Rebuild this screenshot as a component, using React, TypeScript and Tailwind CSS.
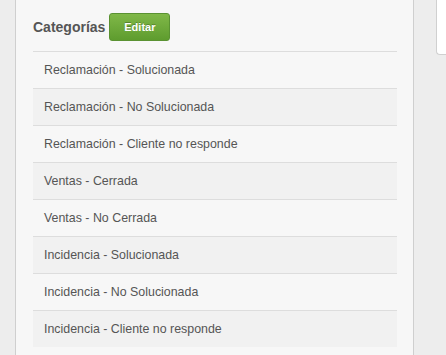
const rows = [
  'Reclamación - Solucionada',
  'Reclamación - No Solucionada',
  'Reclamación - Cliente no responde',
  'Ventas - Cerrada',
  'Ventas - No Cerrada',
  'Incidencia - Solucionada',
  'Incidencia - No Solucionada',
  'Incidencia - Cliente no responde',
];

export default function App() {
  return (
    <div className="flex h-[355px] w-[446px] overflow-hidden bg-[#ededed] font-['Liberation_Sans',Arial,sans-serif]">
      {/* left strip */}
      <div className="w-[15px] shrink-0" />

      {/* panel */}
      <div className="w-[399px] shrink-0 border-x border-[#cfcfcf] bg-[#f7f7f7] pl-[17px] pr-[16px] pt-[13px]">
        <div className="flex items-center h-[28px] mb-[10px]">
          <h2 className="text-[14px] font-bold text-[#555555] mr-[4px]">Categorías</h2>
          <button className="h-[28px] w-[61px] rounded-[3px] border border-[#5a9232] bg-gradient-to-b from-[#80b848] to-[#5e9c2e] text-[11px] font-bold text-white [text-shadow:0_-1px_0_rgba(0,0,0,0.25)]">
            Editar
          </button>
        </div>

        <div>
          {rows.map((r, i) => (
            <div
              key={r}
              className={`h-[37px] border-t border-[#dddddd] pl-[11px] flex items-center text-[12.4px] text-[#555555] ${
                i % 2 === 1 ? 'bg-[#f1f1f1]' : 'bg-[#f7f7f7]'
              }`}
            >
              {r}
            </div>
          ))}
        </div>
      </div>

      {/* right area */}
      <div className="flex-1 flex justify-end">
        <div className="w-[10px] h-[55px] bg-white border-l border-b border-[#d0d0d0] rounded-bl-[4px]" />
      </div>
    </div>
  );
}
